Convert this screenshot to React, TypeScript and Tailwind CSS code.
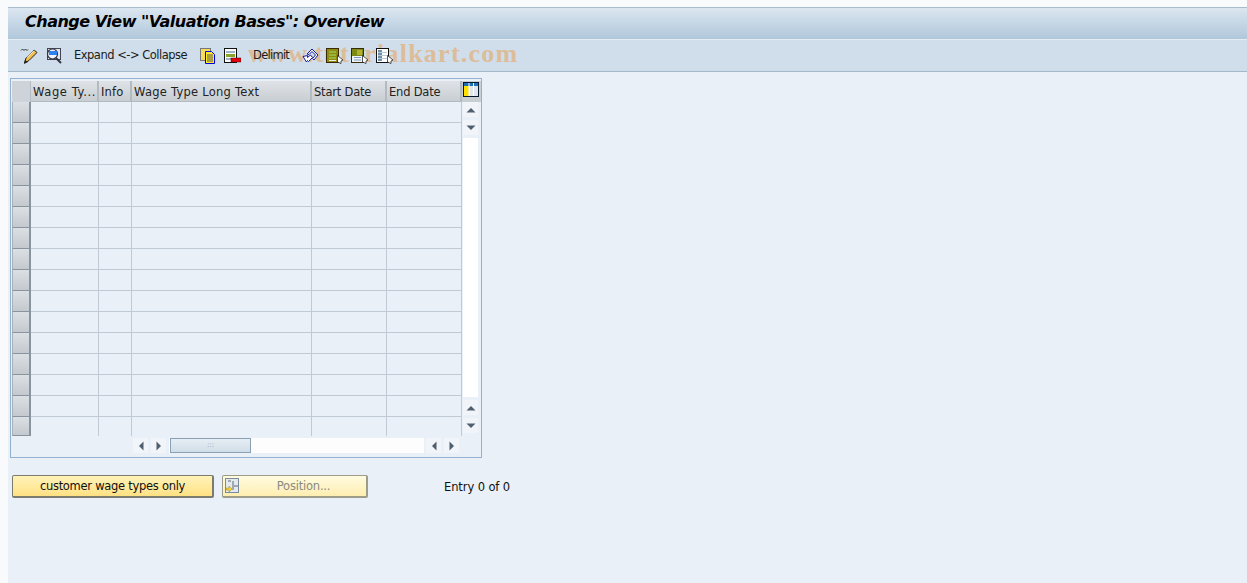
const columns = [
  { label: "Wage Ty...", width: "w-[68px]", spacing: "tracking-[0.6px]" },
  { label: "Info", width: "w-[33px]", spacing: "tracking-[0.2px]" },
  { label: "Wage Type Long Text", width: "w-[180px]", spacing: "tracking-[0.25px]" },
  { label: "Start Date", width: "w-[75px]", spacing: "tracking-[-0.2px]" },
  { label: "End Date", width: "w-[75px]", spacing: "tracking-[-0.2px]" },
];

const rows = Array.from({ length: 16 }, (_, i) => i);

function EditIcon() {
  return (
    <svg width="18" height="18" viewBox="0 0 18 18" className="shrink-0">
      <path d="M1 3.500l1.500-1.500 1.500 1.500 1.500-1.500 1.500 1.500 1-1" fill="none" stroke="#333" strokeWidth="1" />
      <path d="M4.500 16l1.500-5 8-8 3 2.500-8 8z" fill="#f5bf4f" stroke="#222" strokeWidth="1" />
      <path d="M7 10.500l7-7" stroke="#fff" strokeWidth="1" />
      <path d="M4 17l1-4 3 2z" fill="#222" />
    </svg>
  );
}

function DisplayIcon() {
  return (
    <svg width="18" height="18" viewBox="0 0 18 18" className="shrink-0">
      <rect x="2.500" y="1.500" width="13" height="11" fill="#dfe8f0" stroke="#445" />
      <circle cx="7.500" cy="7" r="5" fill="#f0f5fa" stroke="#334" strokeWidth="1.200" />
      <rect x="4" y="4" width="8" height="4" fill="#2f80f0" />
      <path d="M11 11l5 5" stroke="#334" strokeWidth="2" />
    </svg>
  );
}

function CopyIcon() {
  return (
    <svg width="16" height="16" viewBox="0 0 16 16" className="shrink-0">
      <rect x="0.500" y="0.500" width="10" height="12" fill="#f4dd5c" stroke="#777" />
      <path d="M5.500 3.500h6l3 3v9h-9z" fill="#ffe930" stroke="#0000e0" />
      <path d="M7 7h6M7 9h6M7 11h6M7 13h6" stroke="#555" strokeWidth="1" />
    </svg>
  );
}

function DeleteIcon() {
  return (
    <svg width="17" height="16" viewBox="0 0 17 16" className="shrink-0">
      <rect x="0.500" y="0.500" width="12" height="14" fill="#fff" stroke="#111" />
      <rect x="2" y="3" width="9" height="2" fill="#9fb4c7" />
      <rect x="2" y="6" width="9" height="3" fill="#8aa62a" />
      <rect x="2" y="10" width="9" height="2" fill="#9fb4c7" />
      <rect x="7" y="10" width="10" height="4" fill="#e8000f" stroke="#400" strokeWidth="0.500" />
    </svg>
  );
}

function ChainIcon() {
  return (
    <svg width="17" height="15" viewBox="0 0 17 15" className="shrink-0">
      <path d="M1 8.500l4.500-1v2l3-2.500 2 2.500-4 4-1-1-1 1.500z" fill="#fff" stroke="#1a1a9c" strokeWidth="1" />
      <path d="M5 6l5-5 6 6-4 5-1.500-1.500 3-3.500-3.500-3.500-3 3z" fill="#f4f6fb" stroke="#1a1a9c" strokeWidth="1" />
    </svg>
  );
}

function BlockIcon({ variant }: { variant: "first" | "second" | "third" }) {
  const frame = variant === "third" ? "#111" : "#3a2a05";
  return (
    <svg width="18" height="16" viewBox="0 0 18 16" className="shrink-0">
      <rect x="0.500" y="0.500" width="12" height="14" fill="#fff" stroke={frame} strokeWidth="1" />
      {variant === "first" && (
        <>
          <rect x="1" y="1" width="11" height="13" fill="#8f8a10" />
          <path d="M3 4h7M3 7h7M3 10h7" stroke="#9bc34a" strokeWidth="1.500" />
          <path d="M3 12.500h7" stroke="#e6eef2" strokeWidth="1" />
        </>
      )}
      {variant === "second" && (
        <>
          <rect x="1" y="1" width="11" height="7" fill="#7b8a12" />
          <rect x="6" y="2" width="5" height="5" fill="#b5b02a" />
          <rect x="1" y="8" width="11" height="6" fill="#eef3f7" />
          <path d="M3 9.500h7M3 12h7" stroke="#7f9fb8" strokeWidth="1" />
        </>
      )}
      {variant === "third" && (
        <>
          <rect x="2" y="2" width="4" height="11" fill="#6f8ea8" />
          <path d="M2 4.500h9M2 7.500h9M2 10.500h9" stroke="#b9cbd9" strokeWidth="1" />
        </>
      )}
      <path d="M11.500 7.500l5.500 4.500-2 1v2.500l-3.500-1.500z" fill="#fff" stroke="#111" strokeWidth="0.700" />
    </svg>
  );
}

function ArrowButton({ dir }: { dir: "up" | "down" | "left" | "right" }) {
  const points = {
    up: "0.500,7.500 9.500,7.500 5,3",
    down: "0.500,2.500 9.500,2.500 5,7",
    left: "7.500,0.500 7.500,9.500 3,5",
    right: "2.500,0.500 2.500,9.500 7,5",
  }[dir];
  return (
    <div className="w-[15px] h-[15px] bg-[#f1f5fa] flex items-center justify-center">
      <svg width="10" height="10" viewBox="0 0 10 10">
        <polygon points={points} fill="#4f5f6e" />
      </svg>
    </div>
  );
}

export default function App() {
  return (
    <div className="w-[1247px] h-[583px] bg-[#f8fafc] pl-2 pt-[7px] overflow-hidden font-['Liberation_Sans',Arial,sans-serif] text-[12px] text-[#111]">
      <div className="h-full bg-[#e9f0f7] flex flex-col">
        <header className="h-[32px] flex items-center pl-[17px] pb-[3px] bg-gradient-to-b from-[#dbe6f0] to-[#b0c7db] border-t border-[#a8bccd]">
          <h1 className="text-[16px] font-bold italic text-black font-['DejaVu_Sans',sans-serif] tracking-[-0.5px]">
            Change View "Valuation Bases": Overview
          </h1>
        </header>

        <div className="relative h-[33px] flex items-center pl-[12px] bg-[#cfdeea] border-t border-[#e5edf4] border-b border-b-[#a3b8ca] font-['DejaVu_Sans',sans-serif] text-[#1b1b1b] text-[11.5px]">
          <span className="absolute left-[240px] top-[-6px] font-['Liberation_Serif',serif] font-bold text-[26px] tracking-[1.25px] text-[#eb9b4a] opacity-50 whitespace-nowrap">
            www.tutorialkart.com
          </span>
          <span className="relative flex items-center">
            <EditIcon />
            <span className="w-[7px]" />
            <DisplayIcon />
            <span className="ml-[11px] tracking-[-0.5px]">Expand &lt;-&gt; Collapse</span>
            <span className="ml-[13px] flex items-center gap-[8px]">
              <CopyIcon />
              <DeleteIcon />
            </span>
            <span className="ml-[12px] tracking-[-0.75px]">Delimit</span>
            <span className="ml-[13px] flex items-center gap-[7px]">
              <ChainIcon />
              <BlockIcon variant="first" />
              <BlockIcon variant="second" />
              <BlockIcon variant="third" />
            </span>
          </span>
        </div>

        <div className="ml-[2px] mt-[6px] w-[472px] h-[380px] border border-[#92b2cf] pl-[1px] pt-[2px] flex flex-col font-['DejaVu_Sans',sans-serif] text-[11.5px]">
          <div className="flex">
            <div className="w-[19px] shrink-0">
              <div className="h-[21px] bg-[#cdd3d9] border-r border-[#b4bdc5]" />
              {rows.map((row) => (
                <div
                  key={row}
                  className={`${row === 15 ? "h-[19px]" : "h-[21px]"} bg-gradient-to-b from-[#dbe0e5] to-[#c3c9ce] border-r-2 border-b border-[#8a949e] border-l border-l-[#a8b2ba]`}
                />
              ))}
            </div>

            <div className="w-[431px] shrink-0">
              <div className="flex h-[21px]">
                {columns.map((col) => (
                  <div
                    key={col.label}
                    className={`${col.width} ${col.spacing} shrink-0 h-full pl-[2px] pt-[3px] flex items-center bg-gradient-to-b from-[#dfe3e7] to-[#c9ced3] border-r-2 border-[#b2bac2] border-b border-b-[#b2bac2] text-[#222] whitespace-nowrap overflow-hidden`}
                  >
                    {col.label}
                  </div>
                ))}
              </div>
              {rows.map((row) => (
                <div
                  key={row}
                  className={`flex ${row < 15 ? "h-[21px] border-b border-[#c0cad5]" : "h-[19px]"}`}
                >
                  {columns.map((col) => (
                    <div key={col.label} className={`${col.width} shrink-0 border-r border-[#c0cad5]`} />
                  ))}
                </div>
              ))}
            </div>

            <div className="w-[19px] shrink-0 flex flex-col items-start">
              <div className="w-[19px] h-[21px] bg-[#c9ced3] pl-[1px] pt-[1px]">
                <svg width="16" height="15" viewBox="0 0 16 15" className="block">
                  <rect x="0.500" y="0.500" width="15" height="14" fill="#fff" stroke="#07182c" />
                  <rect x="1" y="1" width="14" height="3" fill="#1f6fb5" />
                  <path d="M6 1v13M10.500 1v13" stroke="#fff" strokeWidth="1" />
                  <rect x="1" y="4" width="4.500" height="10" fill="#ffe000" />
                  <rect x="7" y="4" width="3" height="10" fill="#dfe6ec" />
                  <rect x="11" y="4" width="4" height="10" fill="#dfe6ec" />
                </svg>
              </div>
              <div className="flex-1 w-[15px] ml-[1px] pb-[3px] flex flex-col">
                <div className="flex flex-col gap-[3px]">
                  <ArrowButton dir="up" />
                  <ArrowButton dir="down" />
                </div>
                <div className="flex-1 bg-white my-[3px]" />
                <div className="flex flex-col gap-[3px]">
                  <ArrowButton dir="up" />
                  <ArrowButton dir="down" />
                </div>
              </div>
            </div>
          </div>

          <div className="flex items-center h-[15px] mt-[2px] pl-[121px]">
            <ArrowButton dir="left" />
            <div className="w-[3px]" />
            <ArrowButton dir="right" />
            <div className="ml-[3px] w-[255px] h-[15px] bg-[#fdfdfe] flex">
              <div className="w-[81px] h-full ml-[1px] bg-gradient-to-b from-[#e6eef4] to-[#d0dde8] border border-[#8ca0b3] flex items-center justify-center text-[7px] leading-none text-[#8a97a3]">
                :::
              </div>
            </div>
            <div className="w-[2px]" />
            <ArrowButton dir="left" />
            <div className="w-[3px]" />
            <ArrowButton dir="right" />
          </div>
        </div>

        <div className="flex items-center mt-[17px] ml-[4px] h-[23px] font-['DejaVu_Sans',sans-serif] text-[11.5px]">
          <button className="w-[202px] h-[23px] pt-[2px] rounded-[2px] border border-[#7b7b6e] border-r-2 border-b-2 bg-gradient-to-b from-[#fff3b8] to-[#ffe183] text-[#111] tracking-[-0.28px]">
            customer wage types only
          </button>
          <button className="relative ml-[8px] w-[146px] h-[23px] pt-[2px] pl-[18px] rounded-[2px] border border-[#9c9c88] border-r-2 border-b-2 bg-gradient-to-b from-[#fffbe0] to-[#feeeb0] text-[#8a8a80] tracking-[-0.2px]">
            <svg width="14" height="15" viewBox="0 0 14 15" className="absolute left-[2px] top-[2px]">
              <rect x="0.500" y="0.500" width="13" height="14" fill="#e4e9ee" stroke="#7d8b98" />
              <path d="M8 3v9M3 3h3M9 8h4" stroke="#5d6b78" />
              <path d="M1 10h3V8l3 3-3 3v-2H1z" fill="#f3d23b" stroke="#a08a10" strokeWidth="0.500" />
            </svg>
            Position...
          </button>
          <span className="ml-[76px] pt-[2px] text-[#111] tracking-[-0.1px]">Entry 0 of 0</span>
        </div>
      </div>
    </div>
  );
}
